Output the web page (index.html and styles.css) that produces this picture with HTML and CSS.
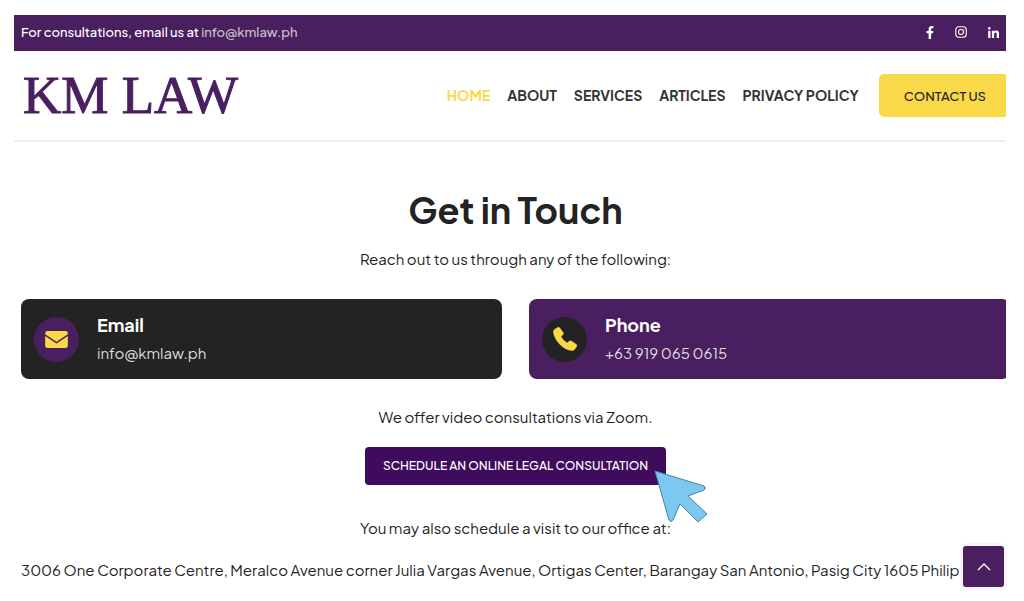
FILE: index.html
```html
<!DOCTYPE html>
<html lang="en">
<head>
    <meta charset="UTF-8">
    <meta name="viewport" content="width=device-width, initial-scale=1.0">
    <title>KM Law - Contact Us</title>
    <link rel="stylesheet" href="styles.css">
</head>
<body>
    <div class="page">
        <div class="topbar">
            <p class="topbar-text">For consultations, email us at <a href="mailto:info@kmlaw.ph">info@kmlaw.ph</a></p>
            <div class="social">
                <a href="#" aria-label="Facebook">
                    <svg width="8" height="13" viewBox="0 0 320 512" fill="currentColor"><path d="M279 288l14-93h-89v-60c0-25 12-50 52-50h41V7s-37-7-72-7c-73 0-121 44-121 125v70H23v93h81v224h100V288z"/></svg>
                </a>
                <a href="#" aria-label="Instagram">
                    <svg width="12" height="12" viewBox="0 0 24 24" fill="none" stroke="currentColor" stroke-width="2.2"><rect x="1.5" y="1.5" width="21" height="21" rx="6"/><circle cx="12" cy="12" r="5"/><circle cx="18" cy="6" r="1" fill="currentColor" stroke="none"/></svg>
                </a>
                <a href="#" aria-label="LinkedIn">
                    <svg width="11" height="11" viewBox="0 0 448 448" fill="currentColor"><path d="M100 448H7V149h93zM54 108C24 108 0 83 0 54a54 54 0 0 1 108 0c0 29-24 54-54 54zM448 448h-93V302c0-34-1-79-48-79-49 0-56 38-56 77v148h-93V149h89v41h1c13-24 43-48 88-48 94 0 112 62 112 142z"/></svg>
                </a>
            </div>
        </div>

        <header class="header">
            <a href="#" class="logo">KM LAW</a>
            <nav class="nav">
                <a href="#" class="active">HOME</a>
                <a href="#">ABOUT</a>
                <a href="#">SERVICES</a>
                <a href="#">ARTICLES</a>
                <a href="#">PRIVACY POLICY</a>
            </nav>
            <a href="#" class="contact-btn">CONTACT US</a>
        </header>

        <main class="content">
            <h1>Get in Touch</h1>
            <p>Reach out to us through any of the following:</p>

            <div class="cards">
                <div class="card card-email">
                    <span class="card-icon">
                        <svg width="23" height="17" viewBox="0 0 24 18"><path fill="currentColor" d="M2.500 0h19Q24 0 24 2.500v1L12 11.500 0 3.500v-1Q0 0 2.500 0zM0 5.200l12 8 12-8v10.300q0 2.500-2.500 2.500h-19Q0 18 0 15.500z"/></svg>
                    </span>
                    <div>
                        <h2>Email</h2>
                        <a href="mailto:info@kmlaw.ph">info@kmlaw.ph</a>
                    </div>
                </div>
                <div class="card card-phone">
                    <span class="card-icon">
                        <svg width="24" height="24" viewBox="0 0 24 24"><path fill="currentColor" d="M1.500 2.200L4.200.4Q5.800-.5 7 1l3.200 4.300q1 1.500-.3 2.700L8.200 9.500q1.800 4 6 6.300l1.900-1.700q1.200-1.100 2.600-.1l4.400 3.100q1.500 1.200.5 2.800l-1.900 2.700q-1.200 1.500-3.500 1.200Q12 22.800 6.500 17.300 1 11.500.2 5.200 0 3.300 1.500 2.200z"/></svg>
                    </span>
                    <div>
                        <h2>Phone</h2>
                        <a href="tel:+639190650615">+63 919 065 0615</a>
                    </div>
                </div>
            </div>

            <p>We offer video consultations via Zoom.</p>
            <div class="schedule">
                <a href="#" class="schedule-btn">SCHEDULE AN ONLINE LEGAL CONSULTATION</a>
                <svg class="pointer" width="54" height="54" viewBox="0 0 54 54"><path fill="#7cc8f0" stroke="#4582a8" stroke-linejoin="round" d="M1 1L50 16Q53 18 50 20L34 26 53 44 44 52 26 34 19 50Q17 53 15 50z"/></svg>
            </div>
            <p>You may also schedule a visit to our office at:</p>
            <p class="address">3006 One Corporate Centre, Meralco Avenue corner Julia Vargas Avenue, Ortigas Center, Barangay San Antonio, Pasig City 1605 Philippines</p>
        </main>
    </div>

    <button type="button" class="to-top" aria-label="Back to top">
        <svg width="14" height="8" viewBox="0 0 14 8" fill="none" stroke="currentColor" stroke-width="1.3"><path d="M1 7l6-6 6 6"/></svg>
    </button>
</body>
</html>
```
FILE: styles.css
```css
* { box-sizing: border-box; }
body { margin: 0; background-color: #fff; color: #232323; font-family: "Plus Jakarta Sans", Inter, "Liberation Sans", sans-serif; font-size: 15px; line-height: 24px; }
a { color: inherit; text-decoration: none; }
h1, h2, p { margin: 0; }
svg { display: block; }

.page { margin: 15px 18px 0 14px; overflow: hidden; }

.topbar { display: flex; justify-content: space-between; align-items: center; height: 36px; padding: 0 7px 2px; background-color: #4a1f60; color: #fff; }
.topbar-text { font-size: 13px; font-weight: 500; }
.topbar-text a { color: #c8c3cb; }
.social { display: flex; align-items: center; gap: 21px; }

.header { display: flex; align-items: center; height: 91px; padding-left: 9px; border-bottom: 2px solid #f0f0f0; white-space: nowrap; }
.logo { margin-right: auto; padding-bottom: 1px; color: #4a1f60; font-family: "Liberation Serif", serif; font-size: 53px; line-height: 60px; -webkit-text-stroke: 1px #4a1f60; }
.nav { display: flex; gap: 17px; margin-right: 20px; padding-bottom: 2px; font-size: 14px; font-weight: 700; color: #333; }
.nav .active { color: #fad948; }
.contact-btn { padding: 10px 20px 9px 25px; border-radius: 5px 0 0 5px; background-color: #fad948; font-size: 13px; font-weight: 500; }

.content { margin-right: -4px; padding: 43px 0 24px 7px; text-align: center; }
.content h1 { margin-bottom: 12px; font-size: 36px; line-height: 50px; font-weight: 700; }

.cards { display: grid; grid-template-columns: 1fr 1fr; gap: 27px; margin: 28px 0 26px; text-align: left; }
.card { display: flex; align-items: center; gap: 18px; height: 80px; padding: 0 13px; border-radius: 8px; color: #fff; }
.card h2 { margin-bottom: 4px; font-size: 18px; line-height: 24px; font-weight: 700; }
.card a { display: block; color: #ddd; }
.card-icon { display: grid; place-items: center; width: 45px; height: 45px; border-radius: 50%; color: #fad948; }
.card-email { background-color: #232323; }
.card-email .card-icon { background-color: #4a1f60; }
.card-phone { background-color: #4a1f60; }
.card-phone .card-icon { background-color: #232323; }

.schedule { position: relative; width: fit-content; margin: 18px auto 31px; }
.schedule-btn { display: block; padding: 7px 18px; border-radius: 4px; background-color: #3f0b5c; color: #fff; font-size: 12px; font-weight: 500; }
.pointer { position: absolute; left: calc(100% - 12px); top: 23px; }
.address { margin-top: 18px; text-align: left; white-space: nowrap; }

.to-top { position: fixed; right: 20px; bottom: 14px; display: grid; place-items: center; width: 41px; height: 41px; padding: 0; border: 0; border-radius: 3px; background-color: #4a1f60; color: #fff; box-shadow: 0 0 0 3px #f7f5f8; cursor: pointer; }
```
